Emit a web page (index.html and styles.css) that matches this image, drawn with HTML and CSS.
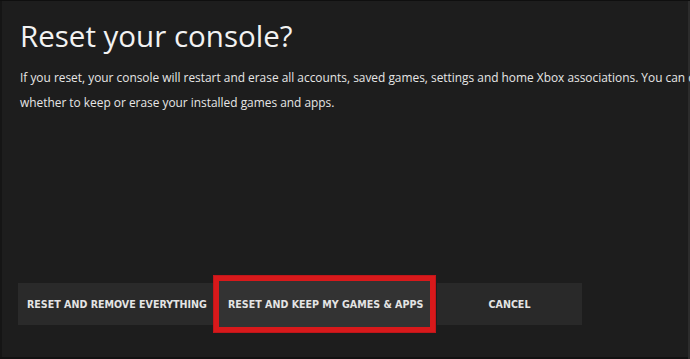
FILE: index.html
```html
<!DOCTYPE html>
<html lang="en">
<head>
<meta charset="utf-8">
<title>Reset your console?</title>
<link rel="stylesheet" href="styles.css">
</head>
<body>
<div class="screen">
  <header class="intro">
    <h1 class="title">Reset your console?</h1>
    <p class="desc">If you reset, your console will restart and erase all accounts, saved games, settings and home Xbox associations. You can choose whether to keep or erase your installed games and apps.</p>
  </header>
  <div class="actions">
    <button class="btn btn-remove">RESET AND REMOVE EVERYTHING</button>
    <button class="btn btn-keep">RESET AND KEEP MY GAMES &amp; APPS</button>
    <button class="btn btn-cancel">CANCEL</button>
  </div>
</div>
</body>
</html>
```
FILE: styles.css
```css
html, body {
  margin: 0;
  padding: 0;
  background: #1c1c1c;
}
body {
  width: 690px;
  height: 359px;
  overflow: hidden;
}
.screen {
  box-sizing: border-box;
  width: 690px;
  height: 359px;
  overflow: hidden;
  display: flex;
  flex-direction: column;
  justify-content: space-between;
  padding: 17px 0 32px 18px;
  background: #1d1d1d;
  box-shadow: inset 0 1px 0 #0f0f0f, inset -2px 0 0 #2c2c2c, inset 0 -2px 0 #121212, inset 2px 0 0 #151515;
  font-family: "Open Sans", "Noto Sans", sans-serif;
  color: #f2f2f2;
}
.intro {
  padding-left: 2px;
  width: 740px;
}
.title {
  margin: 0;
  font-size: 29.5px;
  font-weight: 400;
  line-height: 38px;
}
.desc {
  margin: 10px 0 0;
  font-size: 11.9px;
  line-height: 25px;
  color: #e6e6e6;
}
.actions {
  display: flex;
  align-items: center;
  gap: 6px;
}
.btn {
  font-family: "DejaVu Sans Condensed", "DejaVu Sans", sans-serif;
  font-stretch: condensed;
  font-weight: 700;
  font-size: 10.6px;
  white-space: nowrap;
  color: #e4e4e4;
  background: #2a2a2a;
  border: none;
  height: 42px;
  padding: 0 9px;
  text-align: left;
}
.btn-remove {
  width: 195px;
}
.btn-keep {
  width: 211px;
  height: 46px;
  padding-left: 9px;
  background: #333333;
  outline: 5px solid #d8191b;
  box-shadow: 0 0 0 1px #3a0808, 0 0 0 6px #c0161a;
}
.btn-cancel {
  width: 145px;
  margin-left: 1px;
  text-align: center;
  background: #292929;
}
```
